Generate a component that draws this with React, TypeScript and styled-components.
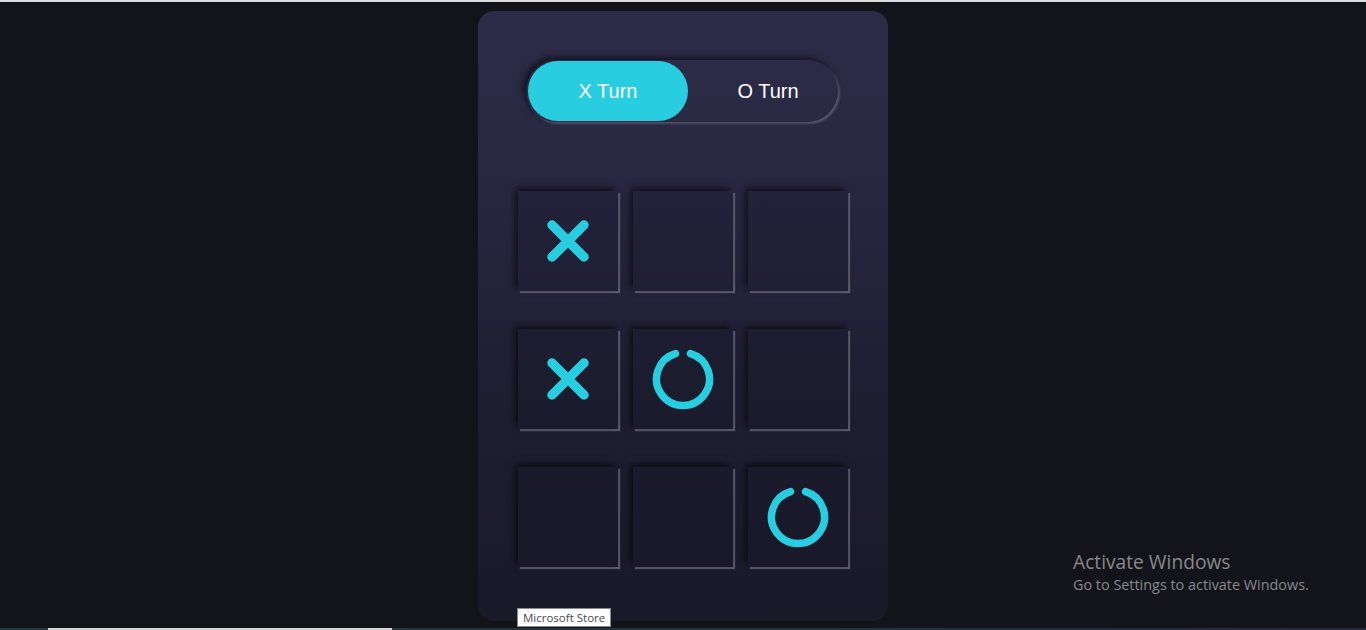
import React from "react";
import styled, { createGlobalStyle } from "styled-components";

const Global = createGlobalStyle`
  html, body { margin: 0; padding: 0; background: #131419; }
  body { font-family: "Liberation Sans", Arial, sans-serif; overflow: hidden; }
  #root { height: 630px; }
`;

const Page = styled.div`
  position: relative;
  height: 630px;
  display: flex;
  flex-direction: column;
  background: #131419;
`;

const TopStrip = styled.div`
  height: 2px;
  background: #dedede;
  flex: none;
`;

const Main = styled.div`
  flex: 1;
  display: flex;
  justify-content: center;
  padding-top: 9px;
`;

const Card = styled.div`
  width: 410px;
  height: 610px;
  box-sizing: border-box;
  border-radius: 16px;
  background: linear-gradient(180deg, #2d2c48 0%, #2a2944 22%, #1f1f33 60%, #191a28 100%);
  display: flex;
  flex-direction: column;
  align-items: flex-start;
  padding: 49px 0 0 48px;
`;

const Toggle = styled.div`
  width: 312px;
  height: 62px;
  box-sizing: border-box;
  padding: 1px 2px 1px 2px;
  border-radius: 31px;
  display: flex;
  box-shadow: -3px -3px 6px rgba(0, 0, 0, 0.55), 2px 2px 2px rgba(120, 120, 140, 0.55);
`;

const TurnButton = styled.div<{ $active?: boolean }>`
  flex: 0 0 160px;
  height: 60px;
  border-radius: 30px;
  display: flex;
  align-items: center;
  justify-content: center;
  color: #ffffff;
  font-size: 20px;
  background: ${(p) => (p.$active ? "#29cde0" : "transparent")};
`;

const Board = styled.div`
  margin-top: 69px;
  margin-left: -8px;
  display: grid;
  grid-template-columns: repeat(3, 100px);
  grid-auto-rows: 100px;
  column-gap: 15px;
  row-gap: 38px;
`;

const Cell = styled.div`
  width: 100px;
  height: 100px;
  background: rgba(20, 20, 35, 0.22);
  display: flex;
  align-items: center;
  justify-content: center;
  box-shadow: -3px -3px 7px rgba(0, 0, 0, 0.6), 2px 2px 1px rgba(110, 110, 128, 0.75);
`;

const BottomStrip = styled.div`
  height: 2px;
  flex: none;
  margin-top: 7px;
  display: flex;
  background: linear-gradient(90deg, #1d3a40 0%, #1f3840 50%, #1e2a44 100%);
`;

const StripGap = styled.div<{ $w: number }>`
  width: ${(p) => p.$w}px;
`;

const StripLight = styled.div`
  width: 344px;
  background: #d8d8d8;
`;

const Tooltip = styled.div`
  position: absolute;
  left: 517px;
  top: 608px;
  height: 19px;
  box-sizing: border-box;
  padding: 0 5px;
  background: #ffffff;
  border: 1px solid #8a8a8a;
  font-family: "Open Sans", "Noto Sans", sans-serif;
  font-size: 11.5px;
  line-height: 17px;
  color: #4a4a52;
`;

const Watermark = styled.div`
  position: absolute;
  left: 1073px;
  top: 549px;
  font-family: "Open Sans", "Noto Sans", sans-serif;
  color: #88888c;
`;

const WmTitle = styled.div`
  font-size: 19.2px;
  line-height: 26px;
`;

const WmSub = styled.div`
  font-size: 14.4px;
  line-height: 20px;
`;

const XMark = () => (
  <svg width="44" height="44" viewBox="0 0 44 44">
    <path d="M6 6 L38 38 M38 6 L6 38" stroke="#29cde0" strokeWidth="9.5" strokeLinecap="round" />
  </svg>
);

const OMark = () => (
  <svg width="62" height="62" viewBox="0 0 62 62">
    <path
      d="M23.5 5.6 A26.5 26.5 0 1 0 38.5 5.6"
      fill="none"
      stroke="#29cde0"
      strokeWidth="7.5"
      strokeLinecap="round"
    />
  </svg>
);

const cells: ("X" | "O" | "")[] = ["X", "", "", "X", "O", "", "", "", "O"];

export default function App() {
  return (
    <Page>
      <Global />
      <TopStrip />
      <Main>
        <Card>
          <Toggle>
            <TurnButton $active>X Turn</TurnButton>
            <TurnButton>O Turn</TurnButton>
          </Toggle>
          <Board>
            {cells.map((c, i) => (
              <Cell key={i}>{c === "X" ? <XMark /> : c === "O" ? <OMark /> : null}</Cell>
            ))}
          </Board>
        </Card>
      </Main>
      <BottomStrip>
        <StripGap $w={48} />
        <StripLight />
      </BottomStrip>
      <Tooltip>Microsoft Store</Tooltip>
      <Watermark>
        <WmTitle>Activate Windows</WmTitle>
        <WmSub>Go to Settings to activate Windows.</WmSub>
      </Watermark>
    </Page>
  );
}
